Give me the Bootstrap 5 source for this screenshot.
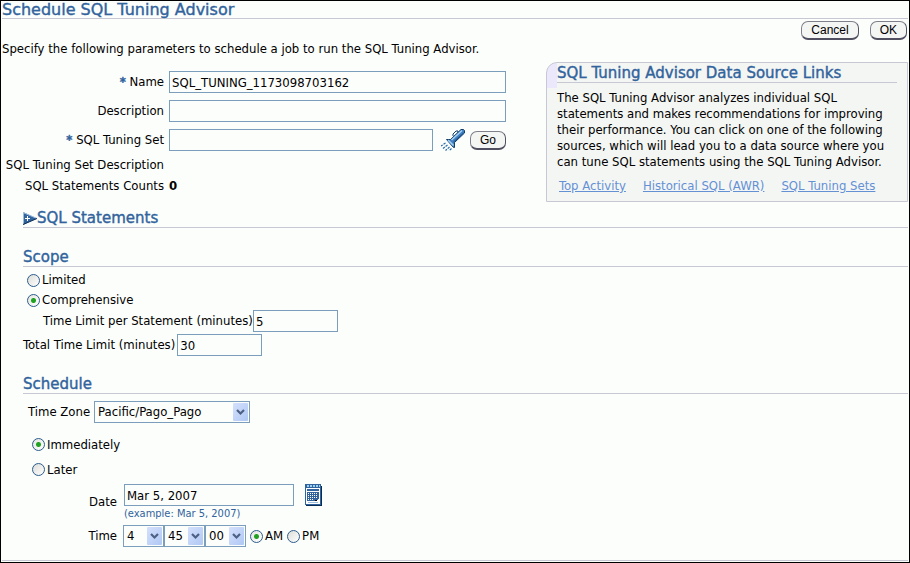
<!DOCTYPE html>
<html lang="en">
<head>
<meta charset="utf-8">
<meta name="viewport" content="width=device-width, initial-scale=1">
<title>Schedule SQL Tuning Advisor</title>
<link href="https://cdn.jsdelivr.net/npm/bootstrap@5.3.0/dist/css/bootstrap.min.css" rel="stylesheet">
<style>
body { font: 13px/16px "DejaVu Sans Condensed", "DejaVu Sans", "Noto Sans", sans-serif; color: #000; background: #fcfefc; }
.page { border: 1px solid #000; min-height: 100vh; padding: 0 1px 1px; }
.page-foot { border-bottom: 1px solid #c8c8d4; }
h1, h2 { font-family: "DejaVu Sans", sans-serif; color: #31639c; border-bottom: 1px solid #c8c8d4; margin: 0; font-weight: 400; -webkit-text-stroke: 0.4px #31639c; }
h1 { font-size: 16px; line-height: 17px; }
h2 { font-size: 15px; line-height: 18px; padding-top: 1px; margin-bottom: -1px; }
.btn-pill { font: 12px/14px "Liberation Sans", Arial, sans-serif; height: 19px; padding: 1px 9px 2px; border: 1px solid #80808c; border-bottom: 2px solid #505060; border-right-color: #505060; border-radius: 7px; background: #f4f6f4; color: #000; }
.actions { display: flex; justify-content: flex-end; gap: 11px; padding: 2px 1px 0 0; }
.intro { margin: 1px 0 5px; }
.field { font: inherit; height: 22px; padding: 0 2px; border: 1px solid #7b9ebd; border-radius: 0; background-color: #fcfefc; color: #000; }
select.field { padding: 0 18px 0 3px; background-size: 15px 18px; background-position: right 1px center; background-image: url("data:image/svg+xml,%3Csvg xmlns='http://www.w3.org/2000/svg' viewBox='0 0 15 18'%3E%3Cdefs%3E%3ClinearGradient id='g' x2='1' y2='1'%3E%3Cstop stop-color='%23d4e0fc'/%3E%3Cstop offset='1' stop-color='%23b0c8f4'/%3E%3C/linearGradient%3E%3C/defs%3E%3Crect width='15' height='18' rx='1' fill='url(%23g)'/%3E%3Cpath d='M4 7l3.5 3.5L11 7' fill='none' stroke='%234c6184' stroke-width='2.2'/%3E%3C/svg%3E"); }
.params { display: grid; grid-template-columns: 162px 337px; column-gap: 5px; row-gap: 7px; padding-top: 9px; align-items: center; align-content: start; }
.params label, .params .caption { text-align: right; }
.caption, .count { white-space: nowrap; line-height: 14px; }
.req { color: #31639c; font-weight: 700; -webkit-text-stroke: 0.4px #31639c; }
.search-field { width: 265px; }
.side { flex: 0 1 362px; border: 1px solid #c8c8d4; border-top-left-radius: 11px; background: linear-gradient(#ece8fc, #ece8fc) 0 0 / 10px 25px no-repeat #f4f6f4; padding: 0 10px 8px; height: 140px; }
.side a { color: #6490d4; }
.side p { margin: 8px 0; }
.links { display: flex; gap: 17px; padding-left: 2px; }
.section { padding-left: 21px; }
.statements { margin-top: 6px; }
.scope-head { margin-top: 20px; }
.schedule-head { margin-top: 18px; }
.scope-opts { padding: 4px 0 0 4px; }
.total-row { padding-top: 2px; }
.zone-row { padding: 8px 0 0 5px; }
.start-opts { padding: 9px 0 0 9px; }
.opt { display: flex; align-items: center; gap: 2px; }
input[type=radio] { appearance: none; width: 13px; height: 13px; margin: 0; border: 1px solid #2c5c8c; border-radius: 50%; background: linear-gradient(135deg, #dcdcd8, #fff); }
input[type=radio]:checked { background: radial-gradient(circle, #21a121 0 2px, transparent 3px), linear-gradient(135deg, #e4e4e0, #fff); }
.num { width: 85px; }
.zone { width: 156px; }
.date-field { width: 170px; }
.clock { width: 41px; }
.when { width: 94px; text-align: right; }
.date-row { display: flex; align-items: center; gap: 7px; padding-top: 2px; }
.date-row .when { padding-top: 10px; margin-bottom: -4px; }
.time-row { display: flex; align-items: center; padding-top: 3px; }
.time-row .when { margin-right: 6px; }
.hint { font-size: 11px; line-height: 16px; color: #31639c; padding-left: 101px; }
.icon-btn { border: 0; padding: 0; background: none; display: flex; }
.r20 { height: 20px; }
.r25 { height: 25px; }
</style>
</head>
<body>
<main class="page d-flex flex-column">
  <h1>Schedule SQL Tuning Advisor</h1>
  <div class="actions">
    <button type="button" class="btn-pill">Cancel</button>
    <button type="button" class="btn-pill">OK</button>
  </div>
  <p class="intro">Specify the following parameters to schedule a job to run the SQL Tuning Advisor.</p>

  <div class="d-flex justify-content-between">
    <form class="params">
      <label for="name"><span class="req">*</span> Name</label>
      <input id="name" class="field" type="text" value="SQL_TUNING_1173098703162">
      <label for="desc">Description</label>
      <input id="desc" class="field" type="text">
      <label for="set"><span class="req">*</span> SQL Tuning Set</label>
      <div class="d-flex align-items-center">
        <input id="set" class="field search-field" type="text">
        <button type="button" class="icon-btn ms-2 me-1" aria-label="Search">
          <svg width="25" height="22" viewBox="0 0 25 22"><path d="M12 7V5l3-3h2v2" fill="none" stroke="#103c6c"/><path d="M5.500 10.500h4L20 .5h2.500l1 1V4L13.500 13.500v5h-1z" fill="#4080c0" stroke="#103c6c"/><path d="M10.500 11L21 1.500M7 11l5.500 5.500" stroke="#a4d0f4" stroke-width="1.600"/><path d="M12.500 13L22.500 4" stroke="#20508c"/><path d="M4.500 14L0 17M6.500 16L2 19.500M8.500 18L4.500 21.500M10.500 19.500L8 22" stroke="#286cac" stroke-width="1.200" stroke-dasharray="2.400 1"/></svg>
        </button>
        <button type="button" class="btn-pill">Go</button>
      </div>
      <span class="caption">SQL Tuning Set Description</span><span></span>
      <span class="caption">SQL Statements Counts</span><b class="count">0</b>
    </form>
    <aside class="side">
      <h2>SQL Tuning Advisor Data Source Links</h2>
      <p>The SQL Tuning Advisor analyzes individual SQL statements and makes recommendations for improving their performance. You can click on one of the following sources, which will lead you to a data source where you can tune SQL statements using the SQL Tuning Advisor.</p>
      <nav class="links"><a href="#">Top Activity</a><a href="#">Historical SQL (AWR)</a><a href="#">SQL Tuning Sets</a></nav>
    </aside>
  </div>

  <section class="section statements">
    <h2 class="d-flex align-items-center"><svg width="14" height="13" viewBox="0 0 14 13"><path d="M0 0l14 6.500L0 13z" fill="#31639c"/><path d="M0 .5l14 6M.5 0v13" stroke="#9cbcdc"/><path d="M0 12.500l14-6" stroke="#103058"/><path d="M2 6.500h5M4.500 4v5" stroke="#fff"/></svg>SQL Statements</h2>
  </section>

  <section class="section">
    <h2 class="scope-head">Scope</h2>
    <div class="scope-opts">
      <label class="opt r20"><input type="radio" name="scope"> Limited</label>
      <label class="opt r20"><input type="radio" name="scope" checked> Comprehensive</label>
    </div>
    <div class="d-flex align-items-center ps-3"><label class="ps-1" for="per">Time Limit per Statement (minutes)</label><input id="per" class="field num" type="text" value="5"></div>
    <div class="opt total-row"><label for="total">Total Time Limit (minutes)</label><input id="total" class="field num" type="text" value="30"></div>
  </section>

  <section class="section">
    <h2 class="schedule-head">Schedule</h2>
    <div class="d-flex align-items-center gap-1 zone-row"><label for="zone">Time Zone</label><select id="zone" class="form-select field zone"><option>Pacific/Pago_Pago</option></select></div>
    <div class="start-opts">
      <label class="opt r25"><input type="radio" name="start" checked> Immediately</label>
      <label class="opt r25"><input type="radio" name="start"> Later</label>
    </div>
    <div class="date-row"><label class="when" for="date">Date</label><input id="date" class="field date-field" type="text" value="Mar 5, 2007">
      <button type="button" class="icon-btn ms-1" aria-label="Choose date">
        <svg width="17" height="22" viewBox="0 0 17 22" shape-rendering="crispEdges"><path d="M1 2h16v20H1z" fill="#082c54"/><path d="M0 0h16v21H0z" fill="#31639c"/><path d="M1 4h14v16H1z" fill="#fff"/><path d="M2 2h13" stroke="#9cd0f0" stroke-width="2" stroke-dasharray="2 1"/><path d="M2 5h12v2H2zM2 8h12v7l-3 2H2z" fill="#31639c"/><path d="M3 9.500h10M3 11.500h10M3 13.500h10M3 15.500h6" stroke="#fff" stroke-dasharray="1 1"/><path d="M10 16h2v1h-2z" fill="#000"/><path d="M3 18.500h10" stroke="#9cbcdc"/></svg>
      </button></div>
    <div class="hint">(example: Mar 5, 2007)</div>
    <div class="time-row"><span class="when">Time</span>
      <select class="form-select field clock" aria-label="Hour"><option>4</option></select><select class="form-select field clock" aria-label="Minute"><option>45</option></select><select class="form-select field clock" aria-label="Second"><option>00</option></select>
      <label class="opt ms-1 me-1"><input type="radio" name="half" checked> AM</label>
      <label class="opt"><input type="radio" name="half"> PM</label></div>
  </section>
  <div class="page-foot mt-auto"></div>
</main>
<script src="https://cdn.jsdelivr.net/npm/bootstrap@5.3.0/dist/js/bootstrap.bundle.min.js"></script>
</body>
</html>
